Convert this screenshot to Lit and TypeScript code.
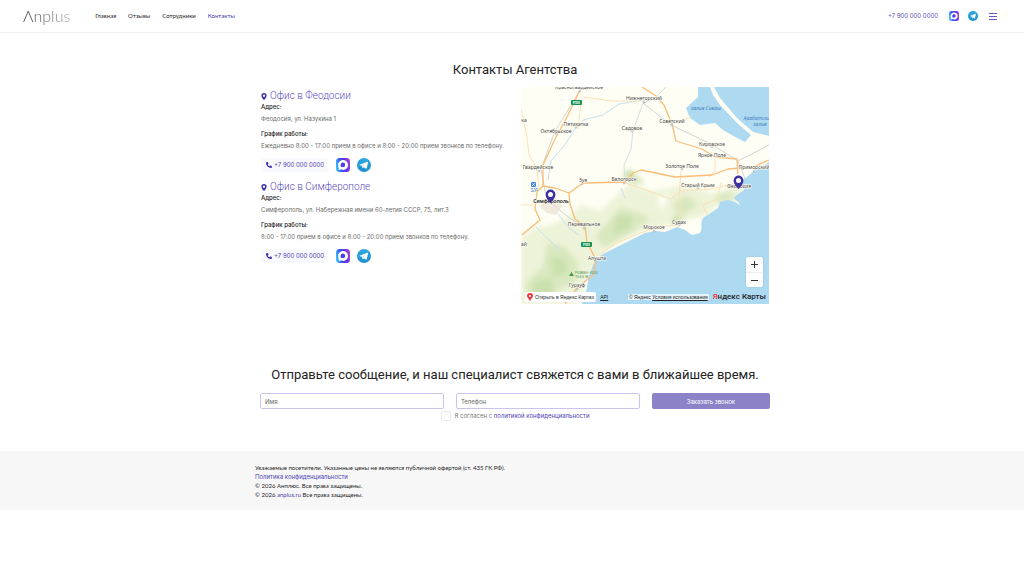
import { LitElement, html, css, svg } from "lit";
import { customElement, property } from "lit/decorators.js";

const PHONE = "+7 900 000 0000";

interface Office {
  title: string;
  address: string;
  hours: string;
}

const OFFICES: Office[] = [
  {
    title: "Офис в Феодосии",
    address: "Феодосия, ул. Назукина 1",
    hours: "Ежедневно 8:00 - 17:00 прием в офисе и 8:00 - 20:00 прием звонков по телефону.",
  },
  {
    title: "Офис в Симферополе",
    address: "Симферополь, ул. Набережная имени 60-летия СССР, 75, лит.3",
    hours: "8:00 - 17:00 прием в офисе и 8:00 - 20:00 прием звонков по телефону.",
  },
];

const maxIcon = html`<svg viewBox="0 0 28 28" aria-hidden="true">
  <defs>
    <linearGradient id="mx" x1="0" y1="0.6" x2="1" y2="0.4">
      <stop offset="0" stop-color="#35c5fb" />
      <stop offset="0.35" stop-color="#3b50f0" />
      <stop offset="0.7" stop-color="#6a32e8" />
      <stop offset="1" stop-color="#a044e0" />
    </linearGradient>
  </defs>
  <rect width="28" height="28" rx="7" fill="url(#mx)" />
  <path
    fill="#fff"
    fill-rule="evenodd"
    d="M14.3 4.2a9.8 9.8 0 0 1 0 19.6c-1.900 0-2.800-.3-4.300-1.300-1 1.200-4.200 2.200-4.400.6 0-1.300-.3-2.300-.6-3.500-.4-1.500-.8-3.300-.8-5.500 0-5.500 4.600-9.900 10.100-9.900zm0 5a4.800 4.800 0 0 0-5 4.300c-.2 1.600.2 3.600.6 4.700.3.300 1-.2 1.400-.6.700.5 1.500.9 2.500.9a4.700 4.700 0 0 0 .5-9.300z"
  />
  <circle cx="14.200" cy="13.900" r="3.900" fill="#4a3fee" />
</svg>`;

const telegramIcon = html`<svg viewBox="0 0 28 28" aria-hidden="true">
  <defs>
    <linearGradient id="tg" x1="0" y1="0" x2="0" y2="1">
      <stop offset="0" stop-color="#2fa9df" />
      <stop offset="1" stop-color="#1c8fce" />
    </linearGradient>
  </defs>
  <circle cx="14" cy="14" r="14" fill="url(#tg)" />
  <path fill="#fff" d="M5.200 13.700 20.800 7.600c.8-.3 1.400.2 1.200 1.200l-2.500 11.800c-.2.900-.8 1.100-1.500.7l-4-3-2 1.900c-.4.400-.9.300-1-.3l-1.200-4.300-4.500-1.300c-.8-.2-.8-.4-.1-.6z" />
  <path fill="#b9def2" d="m10.600 15.500 8.200-5.400-6.300 6.300-.6 3.600z" />
</svg>`;

const pinIcon = html`<svg viewBox="0 0 12 16" aria-hidden="true">
  <path fill="currentColor" fill-rule="evenodd" d="M6 0a6 6 0 0 1 6 6c0 3-3.500 7.500-6 10C3.500 13.500 0 9 0 6a6 6 0 0 1 6-6zm0 3.300a2.700 2.700 0 1 0 0 5.400 2.700 2.700 0 0 0 0-5.400z" />
</svg>`;

const phoneIcon = html`<svg viewBox="0 0 16 16" aria-hidden="true">
  <path fill="currentColor" d="M5.200.8c-.3-.6-.9-.9-1.500-.7L1 .9C.4 1 0 1.600 0 2.200 0 9.800 6.200 16 13.800 16c.6 0 1.200-.4 1.300-1l.8-2.700c.2-.6-.1-1.300-.7-1.500l-3.300-1.400c-.5-.2-1.100-.1-1.500.4l-1.300 1.700a10.400 10.400 0 0 1-4.500-4.500l1.700-1.400c.4-.4.6-1 .3-1.500z" />
</svg>`;

@customElement("messenger-links")
class MessengerLinks extends LitElement {
  static styles = css`
    :host {
      display: flex;
      align-items: center;
      gap: var(--messenger-gap, 7px);
    }
    .link {
      display: block;
      width: var(--messenger-size, 14px);
      height: var(--messenger-size, 14px);
    }
    .link svg {
      display: block;
      width: 100%;
      height: 100%;
    }
  `;
  render() {
    return html`
      <a class="link" href="#" aria-label="MAX">${maxIcon}</a>
      <a class="link" href="#" aria-label="Telegram">${telegramIcon}</a>
    `;
  }
}

@customElement("site-header")
class SiteHeader extends LitElement {
  static styles = css`
    :host {
      display: block;
      border-bottom: 1px solid #f1f1f1;
    }
    .bar {
      display: flex;
      align-items: center;
      height: 32px;
      padding: 0 27px 0 23px;
    }
    .logo {
      font: 300 16px/20px Lato, "Open Sans", sans-serif;
      color: transparent;
      background: linear-gradient(90deg, #333, #777 60%, #aaa);
      background-clip: text;
      -webkit-background-clip: text;
      text-decoration: none;
    }
    .nav {
      display: flex;
      gap: 12px;
      margin-left: 25px;
      font-family: Lato, sans-serif;
      font-size: 6px;
      line-height: 10px;
    }
    .nav a {
      color: #222;
      text-decoration: none;
    }
    .nav .current {
      color: #4634b0;
    }
    .tools {
      display: flex;
      align-items: center;
      gap: 11px;
      margin-left: auto;
      --messenger-size: 10px;
      --messenger-gap: 9px;
    }
    .phone {
      color: #5a4bbd;
      font-size: 6px;
      line-height: 10px;
      text-decoration: none;
    }
    .menu {
      display: grid;
      gap: 2px;
      width: 8px;
      padding: 0;
      border: 0;
      background: none;
    }
    .line {
      height: 1px;
      background: #6657c4;
    }
  `;
  render() {
    return html`<header class="bar">
      <a class="logo" href="#">Λnplus</a>
      <nav class="nav">
        <a href="#">Главная</a>
        <a href="#">Отзывы</a>
        <a href="#">Сотрудники</a>
        <a class="current" href="#" aria-current="page">Контакты</a>
      </nav>
      <div class="tools">
        <a class="phone" href="tel:+79000000000">${PHONE}</a>
        <messenger-links></messenger-links>
        <button class="menu" type="button" aria-label="Меню">
          <span class="line"></span><span class="line"></span><span class="line"></span>
        </button>
      </div>
    </header>`;
  }
}

@customElement("office-card")
class OfficeCard extends LitElement {
  @property({ attribute: false }) office!: Office;

  static styles = css`
    :host {
      display: block;
      font-size: 6px;
      line-height: 10px;
      color: #6c6c6c;
    }
    .title {
      display: flex;
      align-items: center;
      gap: 3px;
      margin: 0;
      color: #5a4bbd;
      font-family: Roboto, sans-serif;
      font-size: 10px;
      line-height: 12px;
      font-weight: 300;
    }
    .title svg {
      width: 6px;
      height: 7px;
      color: #3d2fa8;
    }
    .label {
      margin: 0;
      color: #222;
      font-weight: 500;
    }
    .text {
      margin: 2px 0 5px;
    }
    .actions {
      display: flex;
      align-items: center;
      gap: 8px;
      padding: 2px 0 9px;
    }
    .phone {
      display: flex;
      align-items: center;
      gap: 2px;
      padding: 2px 4px 2px 5px;
      border-radius: 2px;
      background: #f8f9fc;
      color: #4d3eb5;
      text-decoration: none;
    }
    .phone svg {
      width: 6px;
      height: 6px;
      color: #3d2fa8;
    }
  `;
  render() {
    const { title, address, hours } = this.office;
    return html`
      <h2 class="title">${pinIcon}${title}</h2>
      <p class="label">Адрес:</p>
      <p class="text">${address}</p>
      <p class="label">График работы:</p>
      <p class="text">${hours}</p>
      <div class="actions">
        <a class="phone" href="tel:+79000000000">${phoneIcon}${PHONE}</a>
        <messenger-links></messenger-links>
      </div>
    `;
  }
}

// Place names on the map: label, centre x, baseline y.
const PLACES: [string, number, number][] = [
  ["Красногвардейское", 58, 2],
  ["Нижнегорский", 123, 13],
  ["Октябрьское", 35, 46],
  ["Пятихатка", 55, 39],
  ["Садовое", 111, 43],
  ["Советский", 151, 36],
  ["Гвардейское", 17, 82],
  ["Зуя", 62, 95],
  ["Белогорск", 103, 94],
  ["Кировское", 191, 59],
  ["Яркое Поле", 191, 70],
  ["Золотое Поле", 161, 81],
  ["Приморский", 233, 82],
  ["Старый Крым", 177, 100],
  ["Феодосия", 218, 101],
  ["Перевальное", 63, 139],
  ["Морское", 133, 142],
  ["Судак", 158, 137],
  ["Алушта", 76, 173],
  ["Гурзуф", 56, 200],
  ["ка", 3, 35],
  ["ай", 3, 159],
];

const TOWNS: [number, number][] = [
  [59, 4], [123, 15], [35, 47], [55, 40], [111, 44], [151, 38], [18, 84], [61, 97], [103, 96],
  [191, 60], [161, 82], [233, 84], [177, 101], [63, 141], [133, 144], [158, 138], [74, 174], [56, 202],
];

const marker = (x: number, y: number) => svg`<g transform="translate(${x} ${y})">
  <path d="M0 0C-2-2.500-4.900-5-4.900-8.500a4.900 4.900 0 0 1 9.800 0C4.900-5 2-2.500 0 0z" fill="#3f319f" />
  <circle cy="-8.500" r="2.500" fill="#fff" />
</g>`;

@customElement("office-map")
class OfficeMap extends LitElement {
  static styles = css`
    :host {
      display: block;
      position: relative;
      align-self: start;
      overflow: hidden;
    }
    .canvas {
      display: block;
      width: 100%;
      height: auto;
    }
    .place {
      font: 5px "Noto Sans", sans-serif;
      fill: #4b4b4b;
      text-anchor: middle;
      paint-order: stroke;
      stroke: #fffef4;
      stroke-width: 1px;
    }
    .capital {
      font-weight: 600;
      fill: #222;
    }
    .sea {
      font: italic 5px "Noto Sans", sans-serif;
      fill: #3f7fc0;
      text-anchor: middle;
    }
    .route {
      font-size: 3px;
      font-weight: 700;
      fill: #fff;
      text-anchor: middle;
    }
    .peak {
      font-size: 4px;
      fill: #5a9a58;
    }
    .zoom {
      position: absolute;
      right: 6px;
      bottom: 17px;
      display: grid;
      width: 17px;
      border-radius: 2px;
      background: #fff;
      box-shadow: 0 0 2px rgba(0, 0, 0, 0.15);
    }
    .step {
      height: 15px;
      padding: 0;
      border: 0;
      background: none;
      color: #333;
    }
    .step svg {
      display: block;
      width: 7px;
      height: 7px;
      margin: auto;
    }
    .step + .step {
      border-top: 1px solid #eee;
    }
    .credits {
      position: absolute;
      inset: auto 3px 2px 4px;
      display: flex;
      align-items: center;
      gap: 4px;
      font: 5px/10px "Liberation Sans", Arial, sans-serif;
      color: #222;
    }
    .credits a {
      color: inherit;
    }
    .open {
      display: flex;
      align-items: center;
      gap: 2px;
      padding: 0 2px;
      border-radius: 2px;
      background: #fff;
      text-decoration: none;
      white-space: nowrap;
    }
    .open svg {
      width: 6px;
      height: 8px;
    }
    .terms {
      margin-left: auto;
      padding: 0 1px;
      background: rgba(255, 255, 255, 0.7);
      line-height: 6px;
      white-space: nowrap;
    }
    .brand {
      font: 500 8px/10px Roboto, sans-serif;
      white-space: nowrap;
    }
    .red {
      color: #f8323b;
    }
  `;
  render() {
    return html`
      <svg class="canvas" viewBox="0 0 248 217" role="img" aria-label="Карта офисов">
        <defs>
          <filter id="soft" x="-20%" y="-20%" width="140%" height="140%">
            <feGaussianBlur stdDeviation="2.500" />
          </filter>
        </defs>
        <rect width="248" height="217" fill="#fffef4" />
        <g filter="url(#soft)">
          <path fill="#edf3d8" d="M0 150 16 140 30 138 48 130 60 118 80 124 98 106 108 98 130 104 165 98 190 106 222 98 216 118 197 118 180 132 150 136 108 150 82 166 66 190 58 217 H0z" />
          <path fill="#d9e8bf" d="M100 88 110 82 124 96 112 98zM82 140 100 120 118 126 130 132 110 146 84 160 74 150zM150 118 165 108 178 118 160 130zM196 108 210 104 214 112 196 116zM26 156 44 160 58 176 54 196 34 204 8 214 4 196 22 180z" />
          <path fill="#cbe0ad" d="M104 84 110 83 114 90 106 92zM96 128 112 130 108 142 92 148zM30 170 44 172 46 186 32 190zM12 196 30 190 34 208 12 208zM152 130 158 128 162 134 150 138z" />
          <path fill="#fffef4" d="M156 140 168 132 184 130 178 146 168 148zM136 110 148 108 140 124z" />
        </g>
        <path fill="#aedaf1" d="M61 217c2-8 4-11 5-17 1-5 1-9 3-14 2-4 2-8 5-11 3-5 5-6 10-9l20-10 20-10 10-2 10 1 12-5 8 3 7 5 8-2c3-4 0-11 3-15l15-10 2-6 8-2 7 2 5 3c-1-4-7-6-6-8l10-7-2-5 1-5 10-8 16-10V217z" />
        <path fill="#aedaf1" d="M177 0v10l-12 11 4 10 10 7 15-2 8 7 14 8 8 4 6-7-14-12-17-18-7-10-3-8zM193 0l6 11 17 20 16 14 16 4V0z" />
        <g fill="none" stroke="#c3e0ee" stroke-width="1">
          <path d="M27 93 30 74 43 59 54 42 62 33 82 28 98 17 122 13M37 127 47 140 58 148M15 140 30 155 40 163M100 101l4 10M145 0l-10 10-12 6" />
          <path d="M122 16 112 44 110 62 103 78 104 92" stroke="#d3e2e4" />
        </g>
        <path fill="none" stroke="#d3d3d0" stroke-width="1" d="M60 2 34 44 20 82 24 104 30 116 50 132 64 140M122 16 150 38 190 57 217 74 248 58M217 74 224 92" />
        <g fill="none" stroke="#fbe0b8" stroke-width="1">
          <path d="M0 22 6 50 8 68 16 82 18 102M0 78 22 80M62 10 90 14 122 14M60 16 57 42M155 36 170 30M194 72 194 84 188 90M12 118 0 118M104 96 128 104 150 112 160 104 190 102 217 96M160 84 158 110 160 122 157 138M200 96 196 112 182 118 186 128M78 168 95 156 122 145 134 140 157 138" />
        </g>
        <g fill="none" stroke="#f9bd78" stroke-width="1.300" stroke-linejoin="round">
          <path d="M59 3 46 30 34 52 22 78 22 99 34 101 48 106 62 96 104 95 112 86 120 83 154 90 191 88 207 82 232 80 248 73" />
          <path d="M22 99 16 105 14 122 19 133 1 148M48 106 49 117 54 132 64 139 66 155 75 173 72 188 57 200 44 217" />
          <path d="M121 0 135 9 143 18 151 37 155 54 181 62 194 70 216 72 217 87" />
        </g>
        <path d="M22 112h14l5 7-6 9-9-2-7-6z" fill="#eadfd4" opacity=".7" />
        <g fill="#fff" stroke="#888" stroke-width=".5">
          ${TOWNS.map(([x, y]) => svg`<circle cx=${x} cy=${y} r="1" />`)}
        </g>
        ${PLACES.map(([name, x, y]) => svg`<text class="place" x=${x} y=${y}>${name}</text>`)}
        <text class="place capital" x="30" y="116">Симферополь</text>
        <text class="sea" x="185" y="23">залив Сиваш</text>
        <text class="sea" x="237" y="33">Арабатский</text>
        <text class="sea" x="239" y="39">залив</text>
        <rect x="50" y="13" width="11" height="5" rx="1" fill="#149454" />
        <text class="route" x="55.500" y="16.700">E105</text>
        <rect x="60" y="155" width="11" height="5" rx="1" fill="#149454" />
        <text class="route" x="65.500" y="158.700">E105</text>
        <rect x="10" y="95" width="5" height="5" rx="1" fill="#3f8ae0" />
        <path d="m11 99 3-3M11.500 96.500l2 2" stroke="#fff" stroke-width=".8" />
        <text class="sea" x="13" y="105">SIP</text>
        <path d="m48 189 2.500-4 2.500 4z" fill="#4a9a4e" />
        <text class="peak" x="54" y="187">Роман-Кош</text>
        <text class="peak" x="54" y="191">1545 м</text>
        ${marker(29.5, 116)} ${marker(217.5, 102)}
      </svg>
      <div class="zoom">
        <button class="step" type="button" aria-label="Приблизить">
          <svg viewBox="0 0 7 7"><path d="M3.500 0v7M0 3.500h7" stroke="currentColor" /></svg>
        </button>
        <button class="step" type="button" aria-label="Отдалить">
          <svg viewBox="0 0 7 7"><path d="M0 3.500h7" stroke="currentColor" /></svg>
        </button>
      </div>
      <div class="credits">
        <a class="open" href="#">
          <svg viewBox="0 0 12 16"><path fill="#f8323b" d="M6 0a6 6 0 0 1 6 6c0 4-5 5-5.500 10h-1C5 11 0 10 0 6a6 6 0 0 1 6-6z" /><circle cx="6" cy="6" r="2.200" fill="#fff" /></svg>
          Открыть в Яндекс Картах
        </a>
        <a href="#">API</a>
        <span class="terms">© Яндекс <a href="#">Условия использования</a></span>
        <span class="brand"><span class="red">Я</span>ндекс Карты</span>
      </div>
    `;
  }
}

@customElement("callback-form")
class CallbackForm extends LitElement {
  static styles = css`
    :host {
      display: block;
    }
    .title {
      margin: 0 0 9px;
      color: #222;
      font-family: Roboto, sans-serif;
      font-size: 13px;
      line-height: 18px;
      font-weight: 400;
      text-align: center;
    }
    .fields {
      display: grid;
      grid-template-columns: 14fr 14fr 9fr;
      gap: 12px;
      padding: 0 5px;
    }
    .field,
    .submit {
      box-sizing: border-box;
      width: 100%;
      height: 16px;
      border-radius: 2px;
      font: inherit;
      font-size: 6px;
    }
    .field {
      padding: 0 4px;
      border: 1px solid #c9c4ea;
      background: #fff;
      color: #333;
    }
    .field::placeholder {
      color: #666;
      opacity: 1;
    }
    .submit {
      padding: 0;
      border: 0;
      background: #8a83c8;
      color: #fff;
    }
    .consent {
      display: flex;
      justify-content: center;
      align-items: center;
      gap: 4px;
      padding-top: 2px;
      color: #777;
      font-size: 6px;
      line-height: 10px;
    }
    .check {
      appearance: none;
      box-sizing: border-box;
      width: 10px;
      height: 10px;
      margin: 0;
      border: 1px solid #eaeaea;
      border-radius: 2px;
      background: #fff;
    }
    .consent a {
      color: #4d3eb5;
      text-decoration: none;
    }
  `;
  render() {
    return html`<form>
      <h2 class="title">Отправьте сообщение, и наш специалист свяжется с вами в ближайшее время.</h2>
      <div class="fields">
        <input class="field" type="text" placeholder="Имя" aria-label="Имя" />
        <input class="field" type="tel" placeholder="Телефон" aria-label="Телефон" />
        <button class="submit" type="button">Заказать звонок</button>
      </div>
      <div class="consent">
        <input class="check" type="checkbox" id="agree" />
        <label for="agree">Я согласен с <a href="#">политикой конфиденциальности</a></label>
      </div>
    </form>`;
  }
}

@customElement("app-root")
class AppRoot extends LitElement {
  static styles = css`
    :host {
      display: block;
      min-height: 100vh;
      background: #fff;
      font-family: Inter, sans-serif;
    }
    .wrap {
      max-width: 520px;
      margin: 0 auto;
      padding-left: 6px;
    }
    .title {
      margin: 28px 0 8px;
      color: #222;
      font-family: Roboto, sans-serif;
      font-size: 13px;
      line-height: 18px;
      font-weight: 400;
      text-align: center;
    }
    .contacts {
      display: grid;
      grid-template-columns: repeat(auto-fit, minmax(240px, 1fr));
      gap: 12px;
      padding: 0 6px;
    }
    .offices {
      padding-top: 3px;
    }
    .form {
      margin: 62px 0 30px;
    }
    .footer {
      padding: 12px 0 11px;
      background: #f7f7f7;
      color: #222;
      font-family: Lato, sans-serif;
      font-size: 6px;
      line-height: 9px;
    }
    .footer p {
      margin: 0;
    }
    .footer a {
      color: #4d3eb5;
      text-decoration: none;
    }
    .footer .policy {
      display: block;
      font-family: Inter, sans-serif;
    }
  `;
  render() {
    return html`
      <site-header></site-header>
      <main class="wrap">
        <h1 class="title">Контакты Агентства</h1>
        <div class="contacts">
          <div class="offices">${OFFICES.map((o) => html`<office-card .office=${o}></office-card>`)}</div>
          <office-map></office-map>
        </div>
        <callback-form class="form"></callback-form>
      </main>
      <footer class="footer">
        <div class="wrap">
          <p>Уважаемые посетители. Указанные цены не являются публичной офертой (ст. 435 ГК РФ).</p>
          <p><a class="policy" href="#">Политика конфиденциальности</a></p>
          <p>© 2026 Анплюс. Все права защищены.</p>
          <p>© 2026 <a href="#">anplus.ru</a> Все права защищены.</p>
        </div>
      </footer>
    `;
  }
}
